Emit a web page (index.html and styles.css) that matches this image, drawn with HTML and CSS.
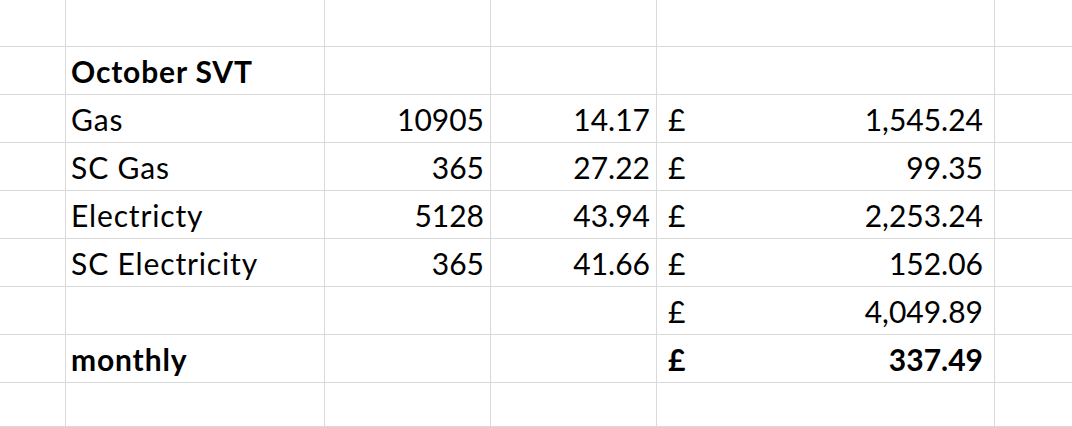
FILE: index.html
```html
<!DOCTYPE html>
<html lang="en">
<head>
<meta charset="utf-8">
<title>October SVT</title>
<link rel="stylesheet" href="styles.css">
</head>
<body>
<div class="sheet">
  <div class="c"></div><div class="c"></div><div class="c"></div><div class="c"></div><div class="c"></div><div class="c last"></div>

  <div class="c"></div><div class="c txt b">October SVT</div><div class="c"></div><div class="c"></div><div class="c"></div><div class="c last"></div>

  <div class="c"></div><div class="c txt">Gas</div><div class="c num">10905</div><div class="c num">14.17</div><div class="c acc"><span>£</span><span>1,545.24</span></div><div class="c last"></div>

  <div class="c"></div><div class="c txt">SC Gas</div><div class="c num">365</div><div class="c num">27.22</div><div class="c acc"><span>£</span><span>99.35</span></div><div class="c last"></div>

  <div class="c"></div><div class="c txt">Electricty</div><div class="c num">5128</div><div class="c num">43.94</div><div class="c acc"><span>£</span><span>2,253.24</span></div><div class="c last"></div>

  <div class="c"></div><div class="c txt">SC Electricity</div><div class="c num">365</div><div class="c num">41.66</div><div class="c acc"><span>£</span><span>152.06</span></div><div class="c last"></div>

  <div class="c"></div><div class="c"></div><div class="c"></div><div class="c"></div><div class="c acc"><span>£</span><span>4,049.89</span></div><div class="c last"></div>

  <div class="c"></div><div class="c txt b">monthly</div><div class="c"></div><div class="c"></div><div class="c acc b"><span>£</span><span>337.49</span></div><div class="c last"></div>

  <div class="c"></div><div class="c"></div><div class="c"></div><div class="c"></div><div class="c"></div><div class="c last"></div>
</div>
</body>
</html>
```

FILE: styles.css
```css
html, body {
  margin: 0;
  padding: 0;
  background: #ffffff;
}

.sheet {
  display: grid;
  grid-template-columns: 66px 259px 166px 166px 338px 1fr;
  grid-template-rows: 47px repeat(7, 48px) 1fr;
  width: 1072px;
  height: 427px;
  overflow: hidden;
  font-family: Lato, "Open Sans", sans-serif;
  font-size: 30px;
  line-height: 36px;
  color: #000000;
}

.c {
  box-sizing: border-box;
  border-right: 1px solid #d9d9d9;
  border-bottom: 1px solid #d9d9d9;
  display: flex;
  align-items: flex-end;
  padding: 0 5px 5px 5px;
  white-space: nowrap;
}

.last {
  border-right: none;
}

.txt {
  justify-content: flex-start;
  padding-left: 5px;
  letter-spacing: 0.85px;
}

.num {
  justify-content: flex-end;
  padding-right: 6px;
}

.acc {
  justify-content: space-between;
  padding-left: 11px;
  padding-right: 11px;
}

.b {
  font-weight: 700;
}
```
